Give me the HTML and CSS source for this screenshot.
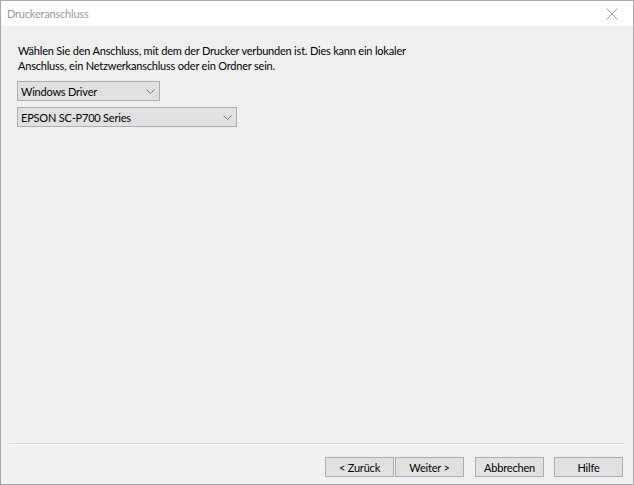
FILE: index.html
```html
<!DOCTYPE html>
<html lang="de">
<head>
    <meta charset="UTF-8">
    <meta name="viewport" content="width=device-width, initial-scale=1.0">
    <title>Druckeranschluss</title>
    <link rel="stylesheet" href="styles.css">
</head>
<body>
    <div class="window">
        <div class="titlebar">
            <span class="title">Druckeranschluss</span>
            <svg class="close" width="12" height="12" viewBox="0 0 12 12">
                <path d="M0.5 0.5 L11.5 11.5 M11.5 0.5 L0.5 11.5" stroke="#9a9a9a" stroke-width="1" fill="none"/>
            </svg>
        </div>
        <div class="content">
            <p class="intro">Wählen Sie den Anschluss, mit dem der Drucker verbunden ist. Dies kann ein lokaler<br>Anschluss, ein Netzwerkanschluss oder ein Ordner sein.</p>
            <div class="combo combo-type">
                <span>Windows Driver</span>
                <svg class="chevron" width="9" height="5" viewBox="0 0 9 5"><path d="M0.5 0.5 L4.5 4.5 L8.5 0.5" stroke="#7a7a7a" fill="none"/></svg>
            </div>
            <div class="combo combo-printer">
                <span>EPSON SC-P700 Series</span>
                <svg class="chevron" width="9" height="5" viewBox="0 0 9 5"><path d="M0.5 0.5 L4.5 4.5 L8.5 0.5" stroke="#7a7a7a" fill="none"/></svg>
            </div>
        </div>
        <div class="footer">
            <div class="separator"></div>
            <div class="buttons">
                <button class="btn">&lt; Zurück</button>
                <button class="btn btn-next">Weiter &gt;</button>
                <button class="btn btn-cancel">Abbrechen</button>
                <button class="btn btn-help">Hilfe</button>
            </div>
        </div>
    </div>
</body>
</html>
```

FILE: styles.css
```css
body {
    margin: 0;
    font-family: Lato, "Liberation Sans", Arial, sans-serif;
    font-size: 11px;
    letter-spacing: -0.2px;
    color: #000;
}

.window {
    width: 634px;
    height: 485px;
    box-sizing: border-box;
    border: 1px solid #a8a8a8;
    background-color: #f0f0f0;
    display: flex;
    flex-direction: column;
}

.titlebar {
    height: 25px;
    background-color: #fff;
    display: flex;
    align-items: center;
    justify-content: space-between;
    padding: 0 15px 0 6px;
}

.title {
    color: #999;
}

.content {
    flex: 1;
    padding: 17px 0 0 16px;
}

.intro {
    margin: 0 0 8px 1px;
    line-height: 15px;
}

.combo {
    height: 20px;
    box-sizing: border-box;
    border: 1px solid #adadad;
    background-color: #e1e1e1;
    display: flex;
    align-items: center;
    justify-content: space-between;
    padding: 0 4px 0 3px;
    margin-bottom: 6px;
}

.combo-type {
    width: 143px;
}

.combo-printer {
    width: 220px;
}

.footer {
    padding: 0 10px 7px 9px;
}

.separator {
    height: 1px;
    background-color: #d6d6d6;
    border-bottom: 1px solid #fff;
    margin-bottom: 12px;
}

.buttons {
    display: flex;
    justify-content: flex-end;
}

.btn {
    width: 69px;
    height: 20px;
    box-sizing: border-box;
    border: 1px solid #adadad;
    background-color: #e1e1e1;
    font-family: Lato, "Liberation Sans", Arial, sans-serif;
    font-size: 11px;
    letter-spacing: -0.2px;
    color: #000;
    padding: 0;
}

.btn-next {
    margin-left: 1px;
}

.btn-cancel {
    margin-left: 11px;
}

.btn-help {
    margin-left: 10px;
}
```
